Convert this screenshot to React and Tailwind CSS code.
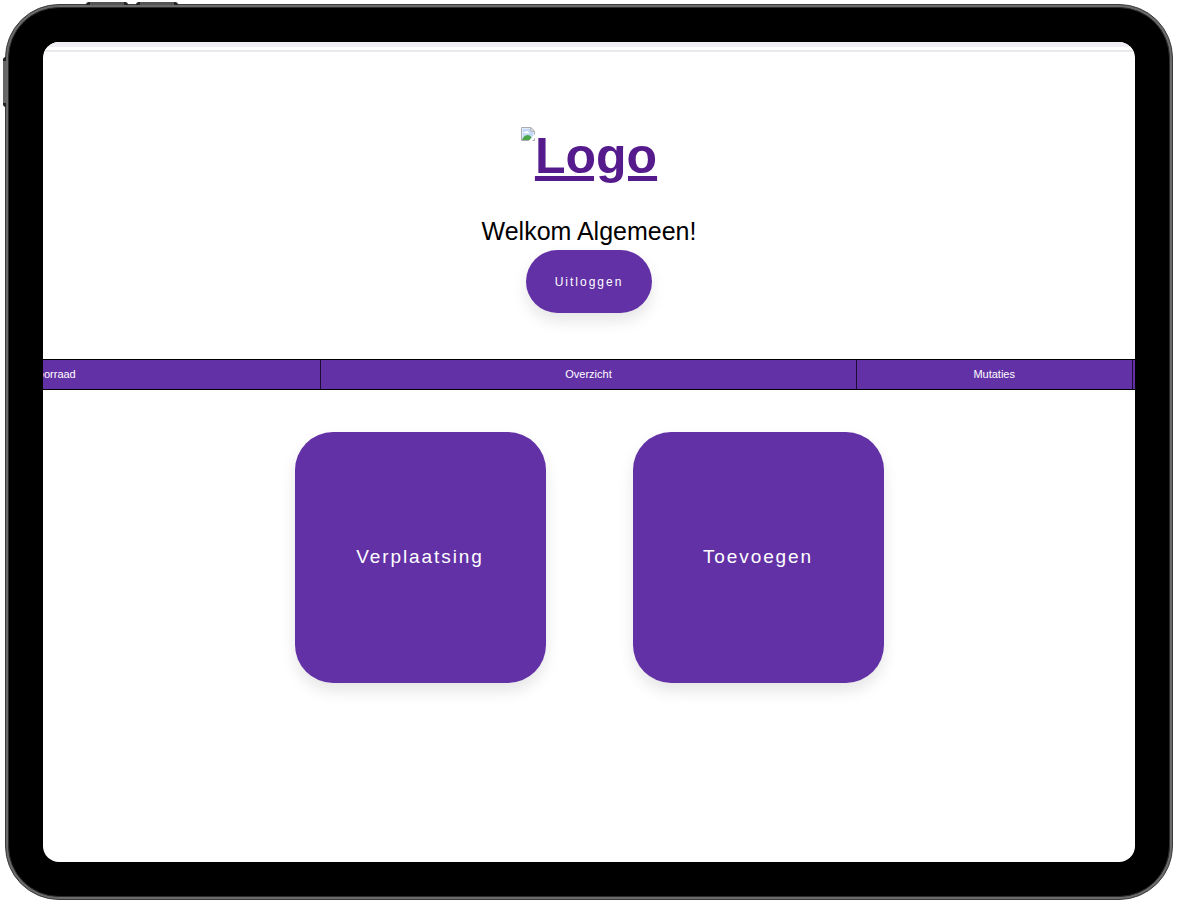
const navItems = [
  { label: 'Voorraad', width: 'w-[49%]' },
  { label: 'Overzicht', width: 'w-[49%]' },
  { label: 'Mutaties', width: 'w-[25.3%]' },
  { label: '', width: 'w-[23.7%]' },
];

const actions = ['Verplaatsing', 'Toevoegen'];

function BrokenImage() {
  return (
    <svg aria-hidden="true" className="mt-px size-3.5 shrink-0" viewBox="0 0 14 14">
      <path d="M.5.5h9.2l3.8 3.8v9.2H.5z" fill="#fff" stroke="#a9adb3" />
      <path d="M1.5 1.5h7.7v3.3h3.3v7.7h-11z" fill="#c3d9f7" />
      <path d="M2.5 6.3c0-1 .8-1.5 1.6-1.4.4-1.3 2.5-1.3 2.9.1 1 0 1.3.7 1.2 1.3z" fill="#fff" />
      <path d="M1 13c.8-2.800 3-5 5.500-5 2.300 0 4.200 1.600 5 5z" fill="#4ca64c" />
      <path d="M14 7v3.500L11 14H7.500z" fill="#fff" />
      <path d="M9.700.5v3.800h3.800z" fill="#eceef0" stroke="#a9adb3" />
    </svg>
  );
}

function DeviceButtons() {
  return (
    <div aria-hidden="true">
      <span className="absolute -top-[3px] left-20 h-[3px] w-[42px] rounded-t-sm border-x-4 border-[#222] bg-[#555]" />
      <span className="absolute -top-[3px] left-[130px] h-[3px] w-[42px] rounded-t-sm border-x-4 border-[#222] bg-[#555]" />
      <span className="absolute top-13 -left-[3px] h-[50px] w-[3px] rounded-l-sm border-y-4 border-[#222] bg-[#666]" />
    </div>
  );
}

export default function App() {
  return (
    <div className="flex min-h-screen bg-white pt-1 pr-1 pb-[3px] pl-[5px] font-['Liberation_Sans',Arial,sans-serif]">
      <div className="relative flex flex-1 rounded-[54px] border border-[#3a3a3a] bg-[#6a6a6a] p-0.5">
        <DeviceButtons />
        <div className="flex min-w-0 flex-1 rounded-[51px] border border-[#2c2c2c] bg-black p-[34px]">
          <div className="flex min-w-0 flex-1 flex-col overflow-hidden rounded-2xl bg-white">
            <div className="h-[10px] border-b-2 border-[#ebe9ed] bg-linear-to-b from-[#f0edf5] from-60% to-white to-60%" />

            <header className="flex flex-col items-center pt-[74px]">
              <h1 className="text-[50px] leading-[60px] font-bold">
                <a href="#" className="flex items-start text-[#551a8b]">
                  <BrokenImage />
                  <span className="underline">Logo</span>
                </a>
              </h1>
              <p className="mt-[30px] mb-1 text-[25px] leading-[30px] text-black">Welkom Algemeen!</p>
              <button
                type="button"
                className="h-[63px] w-[126px] rounded-full bg-[#6331a6] text-xs tracking-[2px] text-white shadow-[0_8px_15px_rgba(0,0,0,0.1)]"
              >
                Uitloggen
              </button>
            </header>

            <nav className="mt-[46px] flex h-[31px] justify-center border-y border-black bg-[#6331a6]">
              {navItems.map((item) => (
                <a
                  key={item.label}
                  href="#"
                  className={`flex shrink-0 items-center justify-center border-r border-[#1d0d33] text-[11px] text-white ${item.width}`}
                >
                  {item.label}
                </a>
              ))}
            </nav>

            <main className="flex flex-wrap justify-center gap-[87px] pt-[42px] pb-16">
              {actions.map((label) => (
                <button
                  key={label}
                  type="button"
                  className="size-[251px] rounded-[38px] bg-[#6331a6] text-[19px] tracking-widest text-white shadow-[0_8px_15px_rgba(0,0,0,0.1)]"
                >
                  {label}
                </button>
              ))}
            </main>
          </div>
        </div>
      </div>
    </div>
  );
}
